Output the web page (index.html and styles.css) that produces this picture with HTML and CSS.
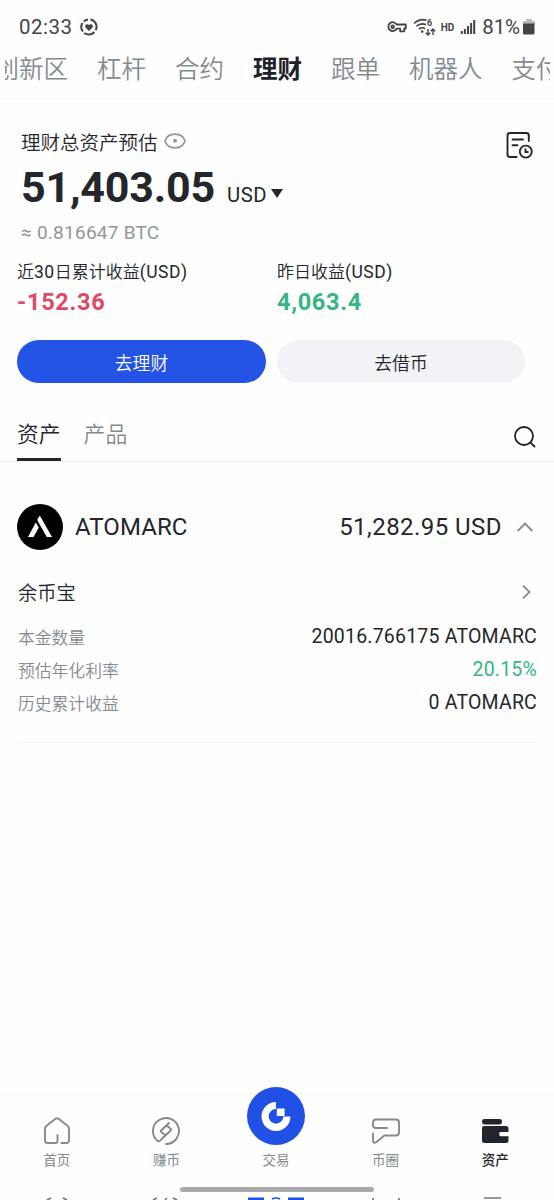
FILE: index.html
```html
<!DOCTYPE html>
<html lang="zh-CN">
<head>
<meta charset="utf-8">
<title>理财</title>
<link rel="stylesheet" href="styles.css">
</head>
<body>
<div class="app">
  <header class="status">
    <span class="time">02:33</span>
    <svg class="i-heart" width="20" height="20" viewBox="0 0 20 20" fill="none"><path d="M11.500 2.400A7.500 7.500 0 0 1 16.700 13.200M15.400 15A7.500 7.500 0 0 1 5.200 16M3.900 14.500A7.500 7.500 0 0 1 3.500 6M4.800 4.400A7.500 7.500 0 0 1 9 2.400" stroke="#444" stroke-width="2"/><path d="M10 14L6.500 10.400C5 8.300 8 5.900 10 8c2-2.100 5 .3 3.500 2.400z" fill="#444"/></svg>
    <span class="spacer"></span>
    <svg class="i-key" width="20" height="14" viewBox="0 0 20 14" fill="none" stroke="#444" stroke-width="1.800" stroke-linejoin="round"><path d="M9.600 4.500H18.800V8.500H17.200V11.400H13.200V8.700H9.600A4.400 4.400 0 1 1 9.600 4.500Z"/><circle cx="5.700" cy="6.700" r="1.300"/></svg>
    <svg class="i-wifi" width="24" height="20" viewBox="0 0 24 20"><g fill="none" stroke="#444" stroke-width="1.600"><path d="M1 6.500Q7 1.200 13.500 3.200M3.500 9.200Q8 5.400 13 7.700M6 12Q9 9.700 12 11.500"/><path d="M15 12v6m-2.200-2.300L15 18l2.200-2.300M20 18v-6m-2.200 2.300L20 12l2.200 2.300" stroke-width="1.400"/></g><circle cx="9.200" cy="14.600" r="1.300" fill="#444"/><text x="14" y="9" class="wifi-gen">6</text></svg>
    <span class="hd">HD</span>
    <svg class="i-signal" width="16" height="16" viewBox="0 0 16 16" fill="#444"><path d="M.8 12h2v3h-2zM3.900 10h2v5h-2zM7 7h2v8H7zM10.100 4h2v11h-2zM13.200 1h2v14h-2z"/></svg>
    <span class="percent">81%</span>
    <svg class="i-battery" width="12" height="16" viewBox="0 0 12 16"><path d="M3 0h6v2h2q1 0 1 1v3H0V3q0-1 1-1h2z" fill="#bbb"/><path d="M0 4.500h11.500V14q0 1.500-1.500 1.500H1.500Q0 15.500 0 14z" fill="#444"/></svg>
  </header>

  <nav class="channels">
    <span class="channel clip-left"><b>创新区</b></span><span class="channel">杠杆</span><span class="channel">合约</span><span class="channel active">理财</span><span class="channel">跟单</span><span class="channel">机器人</span><span class="channel clip-right">支付</span>
  </nav>

  <section class="summary">
    <div class="caption">
      <span>理财总资产预估</span>
      <svg class="i-eye" width="22" height="16" viewBox="0 0 22 16" fill="none" stroke="#91969b" stroke-width="1.700"><path d="M1 8C2.500 3.300 7 1.200 11 1.200S19.500 3.300 21 8c-1.500 4.700-6 6.800-10 6.800S2.500 12.700 1 8z"/><circle cx="11" cy="7.800" r="2" fill="#91969b" stroke="none"/></svg>
      <span class="spacer"></span>
      <svg class="i-record" width="28" height="28" viewBox="0 0 28 28" fill="none" stroke="#24262b" stroke-width="1.900"><path d="M23.800 10V4.500Q23.800 2 21.300 2H5Q2.500 2 2.500 4.500V23.500Q2.500 26 5 26H11.500M7.500 8.500H18M7.500 14.300H12.500" stroke-linecap="round"/><circle cx="20.800" cy="20.600" r="6"/><path d="M20.500 17.500V21H23.500"/></svg>
    </div>
    <div class="total"><strong>51,403.05</strong><span class="unit">USD</span><i class="caret"></i></div>
    <div class="btc">≈ 0.816647 BTC</div>
    <div class="profits">
      <div><div class="label">近<span>30</span>日累计收益<span>(USD)</span></div><div class="value loss">-152.36</div></div>
      <div><div class="label">昨日收益<span>(USD)</span></div><div class="value gain">4,063.4</div></div>
    </div>
    <div class="actions"><button class="primary">去理财</button><button>去借币</button></div>
  </section>

  <div class="tabs">
    <span class="tab selected">资产</span><span class="tab">产品</span><span class="spacer"></span>
    <svg class="i-search" width="24" height="24" viewBox="0 0 24 24" fill="none" stroke="#222" stroke-width="1.800" stroke-linecap="round"><circle cx="11" cy="11" r="9"/><path d="M17.600 17.600L21.500 21.500"/></svg>
  </div>

  <section class="asset">
    <div class="asset-head">
      <svg width="46" height="46" viewBox="0 0 46 46"><circle cx="23" cy="23" r="23" fill="#000"/><path d="M20.500 15L22.800 11.500L35 33H29.800L20.700 17z" fill="#fff"/><path d="M18.800 18.500L21.800 23.500L16.500 33H11z" fill="#fff"/></svg>
      <span class="coin">ATOMARC</span><span class="spacer"></span><span class="worth">51,282.95 USD</span>
      <svg class="i-up" width="16" height="10" viewBox="0 0 16 10" fill="none" stroke="#888" stroke-width="1.800"><path d="M.7 9L8 1.500L15.300 9"/></svg>
    </div>
    <div class="product"><span>余币宝</span><svg width="9" height="14" viewBox="0 0 9 14" fill="none" stroke="#888" stroke-width="1.800"><path d="M1 .7L7.500 7L1 13.300"/></svg></div>
    <div class="row"><span>本金数量</span><span class="num">20016.766175 <em>ATOMARC</em></span></div>
    <div class="row"><span>预估年化利率</span><span class="num rate">20.15%</span></div>
    <div class="row"><span>历史累计收益</span><span class="num">0 <em>ATOMARC</em></span></div>
  </section>

  <footer class="dock">
    <a class="item"><svg width="28" height="28" viewBox="0 0 28 28" fill="none" stroke="#85888d" stroke-width="1.900" stroke-linecap="round" stroke-linejoin="round"><path d="M14.500 18V24Q14.500 26 12.500 26H4.500Q2 26 2 23.500V11.500Q2 10 3.200 9L12.500 1.800Q14 .8 15.500 1.800L24.800 9Q26 10 26 11.500V23.500Q26 26 23.500 26H18.500"/></svg><span>首页</span></a>
    <a class="item"><svg width="28" height="28" viewBox="0 0 28 28" fill="none" stroke="#85888d" stroke-width="1.900" stroke-linecap="round" stroke-linejoin="round"><path d="M14 27A13 13 0 1 0 5.200 23.600Q7 25 8.500 23.300L18.600 13.500Q19.500 12.600 18.600 11.700L15.500 9.300M17 6L9.300 13.200Q8.400 14.100 9.300 15L12.500 17.500"/></svg><span>赚币</span></a>
    <a class="item trade"><svg width="58" height="58" viewBox="0 0 58 58"><circle cx="29" cy="29" r="29" fill="#2050e6"/><path d="M29 18.500A10.900 10.900 0 1 0 39.900 29.400" fill="none" stroke="#fff" stroke-width="7.200"/><path d="M29.800 21.500h7.800v7.500h-7.800z" fill="#fff"/></svg><span>交易</span></a>
    <a class="item"><svg width="28" height="28" viewBox="0 0 28 28" fill="none" stroke="#85888d" stroke-width="1.900" stroke-linecap="round" stroke-linejoin="round"><path d="M15 11H4Q1 11 1 8V5.500Q1 2.500 4 2.500H24Q27 2.500 27 5.500V15.500Q27 18.500 24 18.500H12.500L4.500 25Q1 27 1 23.500V16.500"/></svg><span>币圈</span></a>
    <a class="item current"><svg width="28" height="28" viewBox="0 0 28 28" fill="#22242d"><rect x="1" y="2" width="20" height="5.400" rx="2.400"/><path d="M3 9H25Q27.500 9 27.500 11.500V15H19.500Q18.200 15 18.200 17T19.500 19.200H27.500V23.500Q27.500 26 25 26H3.500Q1 26 1 23.500V11Q1 9 3 9z"/></svg><span>资产</span></a>
    <svg class="next-row" width="554" height="5" viewBox="0 0 554 5" fill="none" stroke="#777" stroke-width="1.700"><path d="M47 5l4-2M67 5l-4-2M153 5l4-2M177 5l-4-2M165 5l2-2M373 5V3M399 5V3M484 3h17"/><path d="M248 4h16M288 4h16" stroke="#2050e6" stroke-width="3"/><path d="M272 4q4-2 8 0" stroke="#2050e6"/></svg>
    <i class="home-bar"></i>
  </footer>
</div>
</body>
</html>
```
FILE: styles.css
```css
* { box-sizing: border-box; }
body { margin: 0; background: #fefefe; color: #24262b; font-family: Roboto, "Noto Sans CJK SC", sans-serif; }
i, em { font-style: normal; }
svg { display: block; flex: none; }
.app { width: 554px; height: 1200px; display: flex; flex-direction: column; overflow: hidden; }
.spacer { flex: 1; }

.status { height: 54px; display: flex; align-items: center; padding: 0 19px 0 19px; color: #444; font-size: 20.5px; }
.time { letter-spacing: .5px; }
.i-heart { margin-left: 6px; }
.i-wifi { margin-left: 6px; }
.wifi-gen { font: bold 9px Roboto, sans-serif; fill: #444; }
.hd { margin: 0 6px 0 4px; font-size: 10px; font-weight: 700; }
.percent { margin-left: 6px; letter-spacing: -.1px; }
.i-battery { margin-left: 3px; }

.channels { height: 45px; display: flex; align-items: center; gap: 29px; padding: 0 5px 14px; border-bottom: 1px solid #f8f8f9; font-size: 24.5px; font-weight: 350; line-height: 31px; color: #858a8f; white-space: nowrap; overflow: hidden; }
.channel { flex: none; }
.channel b { font-weight: 350; }
.clip-left { width: 63px; display: flex; justify-content: flex-end; overflow: hidden; }
.clip-right { width: 38px; overflow: hidden; }
.channel.active { font-weight: 700; color: #202228; }

.summary { padding: 29px 18px 0 17px; }
.caption { height: 30px; display: flex; align-items: center; padding-left: 4px; font-size: 19.5px; font-weight: 350; }
.caption > span:first-child { margin-top: -4px; }
.i-eye { margin: -4px 0 0 6px; }
.i-record { margin: 3px 3px 0 0; }
.total { height: 60px; display: flex; align-items: baseline; padding-left: 4px; line-height: 58px; }
.total strong { font-size: 43px; font-weight: 700; letter-spacing: -.2px; }
.unit { margin-left: 12px; font-size: 20.3px; letter-spacing: .6px; }
.caret { margin: 0 0 4px 4px; align-self: center; border: 6px solid transparent; border-top: 9px solid #24262b; border-bottom: 0; position: relative; top: 7px; }
.btc { height: 30px; padding-left: 4px; line-height: 30px; font-size: 19px; letter-spacing: .25px; color: #91969b; }
.profits { display: grid; grid-template-columns: 260px 1fr; margin-top: 10px; }
.label { height: 28px; line-height: 29px; font-size: 17px; font-weight: 350; }
.label span { font-size: 17.500px; font-weight: 400; letter-spacing: .5px; }
.value { height: 32px; line-height: 33px; font-size: 23.5px; font-weight: 700; letter-spacing: .7px; }
.loss { color: #df4964; }
.gain { color: #35b584; }
.actions { display: grid; grid-template-columns: 249px 248px; gap: 11px; margin-top: 22px; }
.actions button { height: 43px; padding: 1px 0 0; border: 0; border-radius: 22px; background: #f2f3f7; color: #24262b; font: 350 17.8px Roboto, "Noto Sans CJK SC", sans-serif; }
.actions .primary { background: #2454e5; color: #fff; }

.tabs { height: 79px; display: flex; padding: 0 17px; gap: 23px; border-bottom: 1px solid #f1f2f3; font-size: 21.8px; font-weight: 350; color: #858a8f; }
.tab { padding-top: 36px; line-height: 32px; }
.selected { color: #24262b; border-bottom: 3px solid #24262b; }
.i-search { margin-top: 42px; }

.asset { margin: 0 17px 0 18px; padding-top: 36px; height: 281px; border-bottom: 1px solid #f1f2f3; }
.asset-head { height: 58px; display: flex; align-items: center; margin-left: -1px; }
.coin, .worth { font-size: 24px; }
.coin { margin-left: 12px; letter-spacing: .1px; }
.worth { margin-right: 15px; letter-spacing: .45px; }
.i-up { margin-right: 4px; }
.product { height: 52px; margin: 10px 0 2px; display: flex; align-items: center; justify-content: space-between; padding-right: 6px; font-size: 19.3px; font-weight: 350; }
.row { height: 33px; display: flex; align-items: center; justify-content: space-between; font-size: 16.8px; font-weight: 350; color: #858a8f; }
.num { font-size: 19.5px; font-weight: 400; letter-spacing: .2px; color: #24262b; }
.rate { color: #35b584; }

.dock { height: 107px; margin-top: auto; display: grid; grid-template-columns: repeat(5, 109.6px); padding-left: 2px; border-top: 2px solid #f9f9fa; position: relative; color: #85888d; font-size: 13.5px; }
.item { display: flex; flex-direction: column; align-items: center; padding-top: 22px; gap: 5px; line-height: 20px; }
.trade { padding-top: 0; margin-top: -8px; gap: 5px; }
.current { color: #22242d; font-weight: 500; }
.next-row { position: absolute; left: 0; bottom: 0; }
.home-bar { position: absolute; left: 180px; bottom: 8px; width: 194px; height: 5px; border-radius: 3px; background: #aaa; }
```
